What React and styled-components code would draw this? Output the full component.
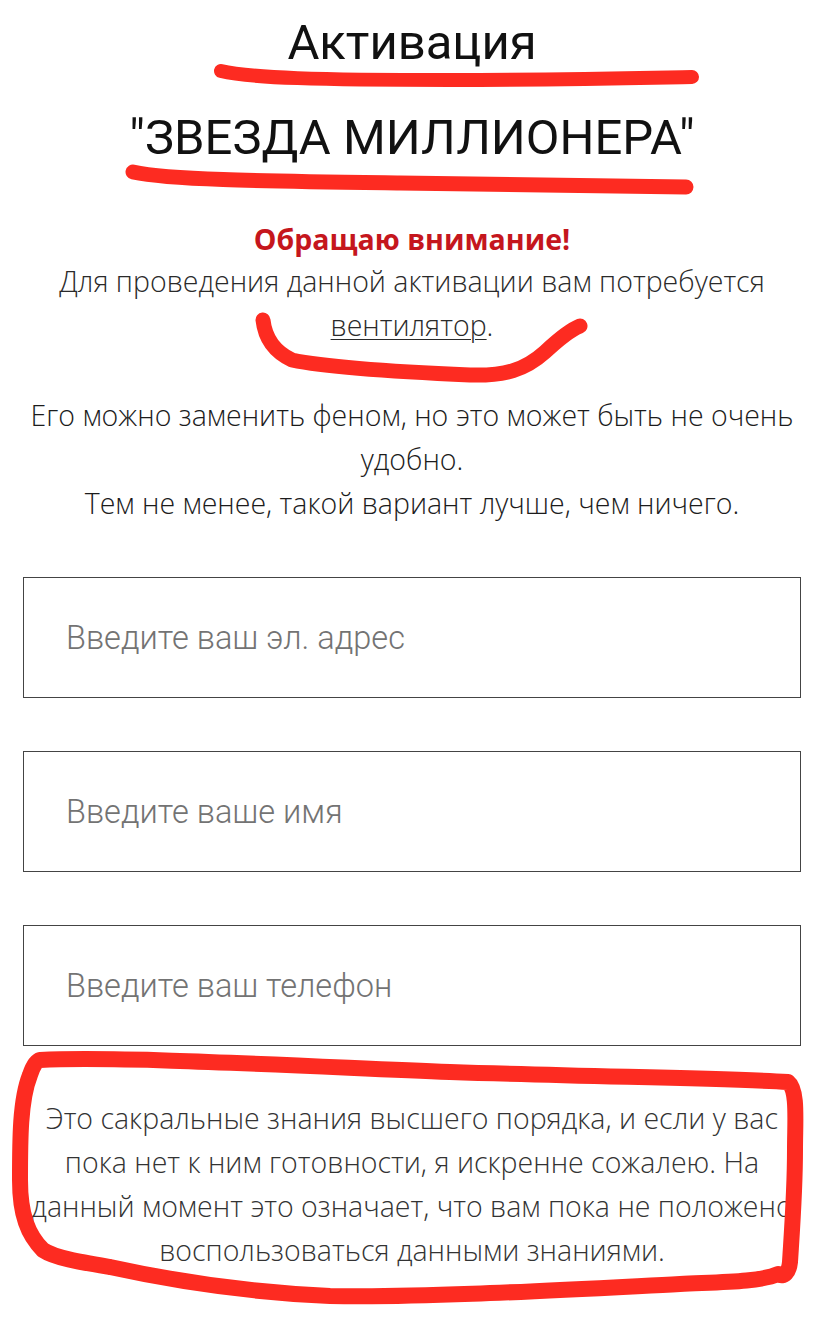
import React from 'react'
import styled, { createGlobalStyle } from 'styled-components'

const Global = createGlobalStyle`
  html, body { margin: 0; padding: 0; background: #fff; }
  * { box-sizing: border-box; }
`

const Page = styled.div`
  position: relative;
  width: 814px;
  height: 1334px;
  overflow: hidden;
  padding: 13px 13px 0 23px;
  display: flex;
  flex-direction: column;
  align-items: center;
`

const Title = styled.h1`
  margin: 0 0 ${p => p.gap}px;
  font-family: Roboto, "Liberation Sans", sans-serif;
  font-weight: 400;
  font-size: 49px;
  line-height: 60px;
  color: #111;
  text-align: center;
  white-space: nowrap;
`

const Notice = styled.div`
  margin-top: 51px;
  font-family: "Open Sans", "Liberation Sans", sans-serif;
  font-weight: 700;
  font-size: 28.5px;
  line-height: 40px;
  color: #c5161d;
  text-align: center;
`

const Text = styled.p`
  margin: ${p => p.top}px 0 0;
  width: 100%;
  font-family: "Open Sans", "Liberation Sans", sans-serif;
  font-weight: 300;
  font-size: 28.5px;
  line-height: 44px;
  color: ${p => p.color};
  text-align: center;
  a {
    color: inherit;
    text-decoration: underline;
    text-underline-offset: 3px;
    text-decoration-thickness: 1px;
  }
`

const Form = styled.form`
  width: 100%;
  margin-top: 52px;
  display: flex;
  flex-direction: column;
  gap: 53px;
`

const Field = styled.input`
  display: block;
  width: 100%;
  height: 121px;
  margin: 0;
  border: 1px solid #444;
  border-radius: 0;
  padding: 0 0 0 42px;
  font-family: Roboto, "Liberation Sans", sans-serif;
  font-weight: 300;
  font-size: 32.5px;
  color: #333;
  background: #fff;
  outline: none;
  &::placeholder { color: #737373; }
`

const Marks = styled.svg`
  position: absolute;
  left: 0;
  top: 0;
  width: 814px;
  height: 1334px;
  pointer-events: none;
  fill: none;
  stroke: #fd2b21;
  stroke-linecap: round;
  stroke-linejoin: round;
`

export default function App() {
  return (
    <>
      <Global />
      <Page>
        <Title gap={35}>Активация</Title>
        <Title gap={0}>"ЗВЕЗДА МИЛЛИОНЕРА"</Title>
        <Notice>Обращаю внимание!</Notice>
        <Text top={0} color="#2a2a2a">
          Для проведения данной активации вам потребуется <a href="#">вентилятор</a>.
        </Text>
        <Text top={46} color="#1c1c1c">
          Его можно заменить феном, но это может быть не очень удобно.<br />
          Тем не менее, такой вариант лучше, чем ничего.
        </Text>
        <Form onSubmit={e => e.preventDefault()}>
          <Field type="email" placeholder="Введите ваш эл. адрес" />
          <Field type="text" placeholder="Введите ваше имя" />
          <Field type="tel" placeholder="Введите ваш телефон" />
        </Form>
        <Text top={50} color="#333">
          Это сакральные знания высшего порядка, и если у вас пока нет к ним готовности, я искренне сожалею. На данный момент это означает, что вам пока не положено воспользоваться данными знаниями.
        </Text>
        <Marks viewBox="0 0 814 1334">
          <path strokeWidth="14" d="M221 71 C 250 78, 320 80, 450 80 C 560 80, 640 78, 692 77" />
          <path strokeWidth="15" d="M133 172 C 170 180, 260 181, 400 183 C 520 185, 620 186, 686 187" />
          <path strokeWidth="15" d="M263 320 C 265 338, 275 352, 292 360 C 330 368, 400 372, 470 375 C 505 376, 525 370, 545 352 C 560 338, 570 330, 580 326" />
          <path strokeWidth="16" d="M40 1060 C 120 1056, 300 1066, 450 1072 C 600 1077, 720 1078, 788 1082 C 798 1090, 795 1120, 795 1150 C 795 1190, 792 1230, 790 1262 C 789 1272, 784 1278, 778 1274 C 760 1282, 720 1282, 680 1284 C 560 1290, 420 1298, 330 1296 C 240 1292, 160 1278, 110 1267 C 80 1262, 55 1258, 43 1250 C 28 1235, 20 1215, 20 1180 C 20 1140, 20 1100, 30 1075 C 33 1066, 36 1061, 40 1060 Z" />
        </Marks>
      </Page>
    </>
  )
}
